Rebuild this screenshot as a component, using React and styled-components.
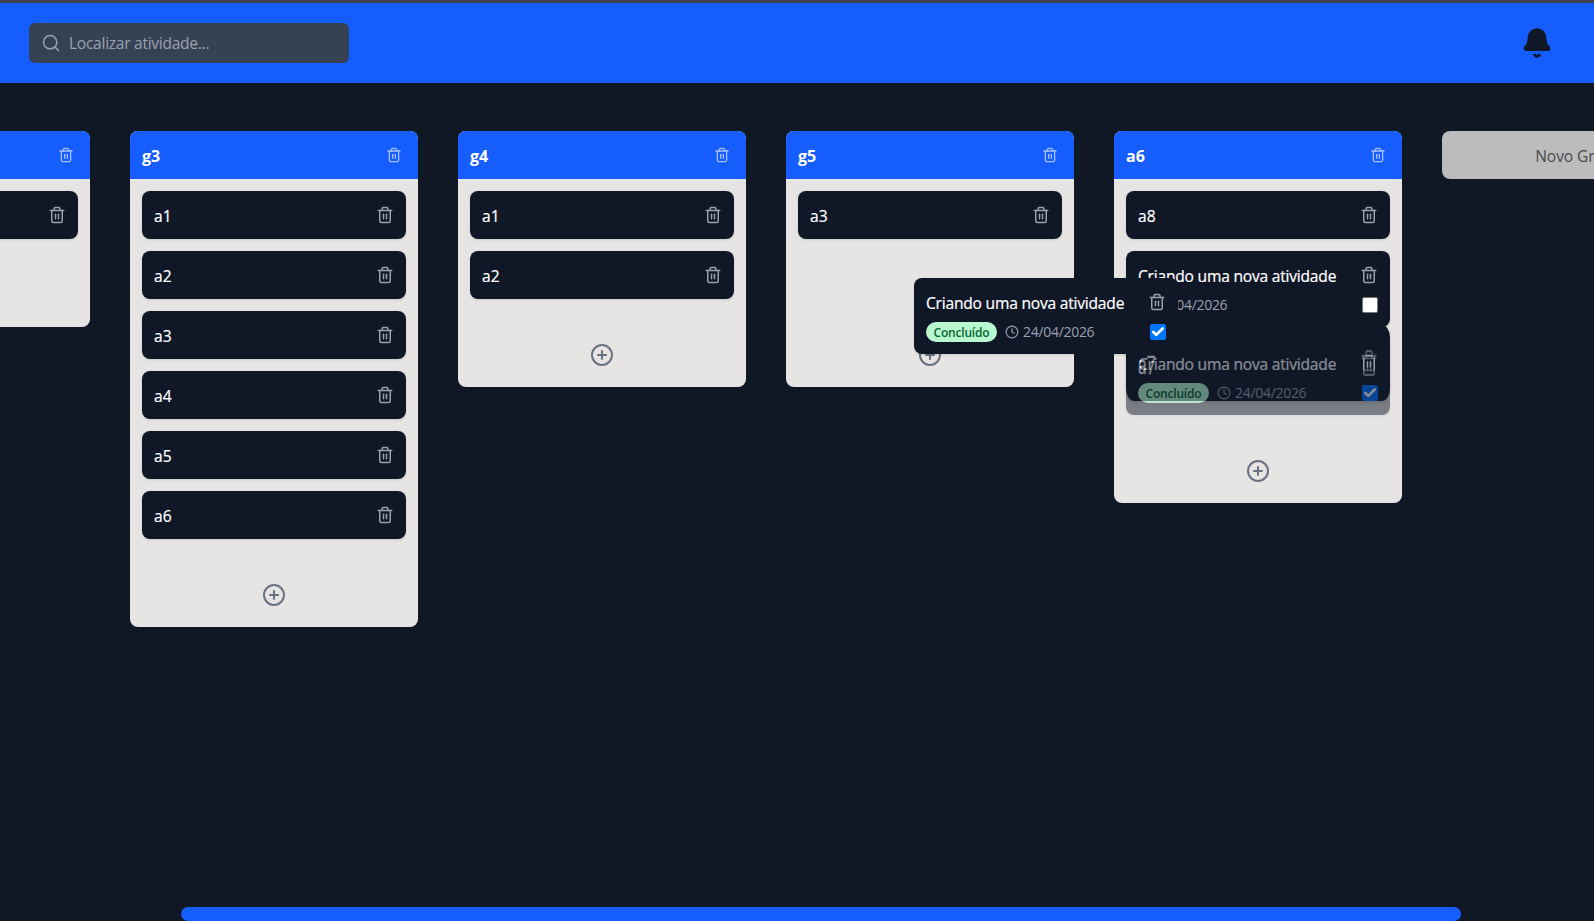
import React from "react";
import styled, { createGlobalStyle, css } from "styled-components";
import { Bell, Check, CirclePlus, Clock, Search, Trash2 } from "lucide-react";

const Global = createGlobalStyle`
  *, *::before, *::after { box-sizing: border-box; }
  html, body { margin: 0; height: 100%; overflow: hidden; background: #101828; }
  body { font-family: "Open Sans", "Noto Sans", sans-serif; font-size: 16px; line-height: 24px; }
`;

const Page = styled.div`
  display: flex;
  flex-direction: column;
  width: 1594px;
  height: 921px;
  overflow: hidden;
  background: #101826;
  border-top: 3px solid #3c434f;
`;

const Header = styled.header`
  flex: none;
  height: 80px;
  padding: 0 41px 0 29px;
  display: flex;
  align-items: center;
  justify-content: space-between;
  background: #155dfc;
  color: #101828;
`;

const SearchBox = styled.label`
  display: flex;
  align-items: center;
  gap: 8px;
  width: 320px;
  height: 40px;
  padding: 0 12px;
  border-radius: 6px;
  background: #364153;
  color: #99a1af;
`;

const SearchText = styled.span`
  font-size: 15.6px;
  letter-spacing: -0.29px;
`;

const Board = styled.main`
  flex: 1;
  display: flex;
  align-items: flex-start;
  gap: 40px;
  padding-top: 48px;
  margin-left: -198px;
`;

const Column = styled.section`
  flex: none;
  width: 288px;
  border-radius: 8px;
  background: #e7e5e4;
`;

const ColumnHead = styled.div`
  height: 48px;
  padding: 0 16px 0 12px;
  display: flex;
  align-items: center;
  justify-content: space-between;
  border-radius: 8px 8px 0 0;
  background: #155dfc;
  color: #fff;

  svg { color: #a1befe; }
`;

const GroupName = styled.span`
  padding-top: 1px;
  font-weight: 700;
  font-size: 16px;
`;

const CardList = styled.div`
  display: flex;
  flex-direction: column;
  gap: 12px;
  padding: 12px 12px 0;
  min-height: ${(p) => p.$minHeight || 0}px;
`;

const AddArea = styled.div`
  display: flex;
  justify-content: center;
  padding: 44px 0 20px;
  color: #6a7282;
`;

const CardBox = styled.article`
  position: relative;
  width: 264px;
  padding: 12px;
  border-radius: 8px;
  background: #101828;
  color: #fff;
  box-shadow: 0 1px 3px rgba(0, 0, 0, 0.1), 0 1px 2px -1px rgba(0, 0, 0, 0.1);
  ${(p) => p.$state === "placeholder" && css`opacity: 0.5; z-index: 2;`}
  ${(p) => p.$state === "shifting" && css`
    margin-bottom: -60px;
    transform: scaleY(1.5833);
  `}
`;

const CardRow = styled.div`
  display: flex;
  align-items: center;
  justify-content: space-between;
  height: 24px;

  > svg { color: #99a1af; }
`;

const DetailRow = styled.div`
  display: flex;
  align-items: center;
  gap: 8px;
  height: 20px;
  margin-top: 8px;
`;

const Title = styled.span`
  padding-top: 1px;
  white-space: nowrap;
  font-size: 15.6px;
  letter-spacing: ${(p) => (p.$long ? "-0.22px" : "0")};
  -webkit-text-stroke: 0.2px currentColor;
`;

const Badge = styled.span`
  width: 71px;
  height: 20px;
  border-radius: 10px;
  background: #b9f8cf;
  color: #016630;
  text-align: center;
  font-size: 12px;
  font-weight: 600;
  letter-spacing: -0.2px;
  line-height: 21px;
`;

const Due = styled.span`
  display: flex;
  align-items: center;
  gap: 4px;
  font-size: 14px;
  letter-spacing: -0.3px;
  color: #99a1af;
`;

const Box = styled.span`
  display: grid;
  place-items: center;
  width: 16px;
  height: 16px;
  margin-left: auto;
  border-radius: 2px;
  border: 1px solid ${(p) => (p.$checked ? "#0075ff" : "#767676")};
  background: ${(p) => (p.$checked ? "#0075ff" : "#fff")};
  color: #fff;
`;

const DragLayer = styled.div`
  position: absolute;
  left: 914px;
  top: 278px;
  z-index: 5;
`;

const NewGroup = styled.button`
  flex: none;
  width: 288px;
  height: 48px;
  padding: 1px 14px 0 0;
  border: 0;
  border-radius: 8px;
  background: #bcbcbe;
  color: #4a4a4a;
  font: inherit;
  font-size: 15.6px;
  letter-spacing: -0.1px;
`;

const ScrollThumb = styled.div`
  flex: none;
  width: 1280px;
  height: 14px;
  margin-left: 181px;
  border-radius: 7px;
  background: #155dfc;
`;

function Card({ title, date, done, state }) {
  return (
    <CardBox $state={state}>
      <CardRow>
        <Title $long={title.length > 4}>{title}</Title>
        <Trash2 size={18} strokeWidth={2} />
      </CardRow>
      {date && (
        <DetailRow>
          {done && <Badge>Concluído</Badge>}
          <Due><Clock size={14} />{date}</Due>
          <Box $checked={done}>{done && <Check size={14} strokeWidth={4.5} />}</Box>
        </DetailRow>
      )}
    </CardBox>
  );
}

const activity = "Criando uma nova atividade";
const groups = [
  { name: "g2", cards: [{ title: "a1" }] },
  { name: "g3", cards: ["a1", "a2", "a3", "a4", "a5", "a6"].map((title) => ({ title })) },
  { name: "g4", cards: [{ title: "a1" }, { title: "a2" }] },
  { name: "g5", cards: [{ title: "a3" }], minHeight: 120 },
  {
    name: "a6",
    cards: [
      { title: "a8" },
      { title: activity, date: "24/04/2026" },
      { title: "a7", state: "shifting" },
      { title: activity, date: "24/04/2026", done: true, state: "placeholder" },
    ],
  },
];

export default function App() {
  return (
    <>
      <Global />
      <Page>
        <Header>
          <SearchBox>
            <Search size={20} strokeWidth={1.8} />
            <SearchText>Localizar atividade...</SearchText>
          </SearchBox>
          <Bell size={32} fill="currentColor" />
        </Header>
        <Board>
          {groups.map((g) => (
            <Column key={g.name}>
              <ColumnHead>
                <GroupName>{g.name}</GroupName>
                <Trash2 size={16} strokeWidth={2} />
              </ColumnHead>
              <CardList $minHeight={g.minHeight}>
                {g.cards.map((c, i) => <Card key={i} {...c} />)}
              </CardList>
              <AddArea><CirclePlus size={24} /></AddArea>
            </Column>
          ))}
          <NewGroup>Novo Grupo</NewGroup>
        </Board>
        <ScrollThumb />
      </Page>
      <DragLayer><Card title={activity} date="24/04/2026" done /></DragLayer>
    </>
  );
}
